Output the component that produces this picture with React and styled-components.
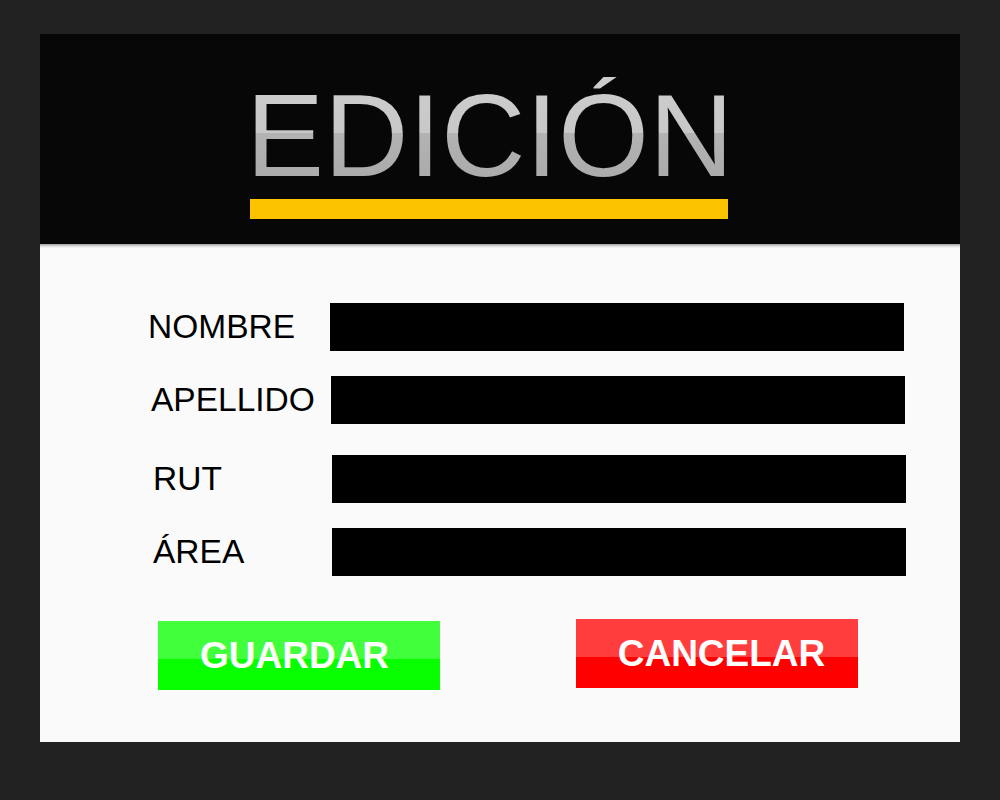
import styled, { createGlobalStyle } from 'styled-components';

const GlobalStyle = createGlobalStyle`
  html, body {
    margin: 0;
    padding: 0;
    background: #222222;
  }
  body {
    font-family: "Liberation Sans", Arial, sans-serif;
  }
`;

const fields = [
    { label: 'NOMBRE', left: 108, right: 56, top: 0 },
    { label: 'APELLIDO', left: 111, right: 55, top: 25 },
    { label: 'RUT', left: 113, right: 54, top: 31 },
    { label: 'ÁREA', left: 113, right: 54, top: 25 },
];

const App = () => {
    return (
        <>
            <GlobalStyle />
            <Page>
                <Panel>
                    <Header>
                        <Title>EDICIÓN</Title>
                        <TitleBar />
                    </Header>
                    <Divider />
                    <FormBody>
                        {fields.map((f) => (
                            <Row key={f.label} $left={f.left} $right={f.right} $top={f.top}>
                                <Label>{f.label}</Label>
                                <Field type="text" />
                            </Row>
                        ))}
                        <Buttons>
                            <Button $top="#42ff3b" $bottom="#07ff00" $offset={2} $shift={-9}>GUARDAR</Button>
                            <Button $top="#ff3d3d" $bottom="#fe0000" $offset={0} $shift={9}>CANCELAR</Button>
                        </Buttons>
                    </FormBody>
                </Panel>
            </Page>
        </>
    );
};

const Page = styled.div`
    width: 1000px;
    height: 800px;
    padding: 34px 40px 0;
    box-sizing: border-box;
    background: #222222;
`;

const Panel = styled.div`
    width: 920px;
    height: 708px;
    display: flex;
    flex-direction: column;
    background: #fafafa;
`;

const Header = styled.div`
    height: 210px;
    flex: none;
    box-sizing: border-box;
    padding: 43px 0 0 206px;
    background: #070707;
    display: flex;
    flex-direction: column;
    align-items: flex-start;
`;

const Divider = styled.div`
    height: 4px;
    flex: none;
    background: linear-gradient(#9a9a9a, #d8d8d8 50%, #fafafa);
`;

const Title = styled.h1`
    margin: 0;
    font-family: "Liberation Sans", Arial, sans-serif;
    font-weight: normal;
    font-size: 117px;
    line-height: 117px;
    background: linear-gradient(#cdcdcd 0%, #c8c8c8 48%, #b3b3b3 48%, #a8a8a8 100%);
    -webkit-background-clip: text;
    background-clip: text;
    color: transparent;
`;

const TitleBar = styled.div`
    width: 478px;
    height: 20px;
    margin: 5px 0 0 4px;
    background: #fcc400;
`;

const FormBody = styled.div`
    flex: 1;
    padding-top: 55px;
    display: flex;
    flex-direction: column;
`;

const Row = styled.div`
    display: flex;
    align-items: center;
    padding: 0 ${(p) => p.$right}px 0 ${(p) => p.$left}px;
    margin-top: ${(p) => p.$top}px;
`;

const Label = styled.label`
    flex: 1;
    font-size: 33.5px;
    color: #000;
    line-height: 48px;
`;

const Field = styled.input`
    width: 574px;
    height: 48px;
    box-sizing: border-box;
    border: none;
    outline: none;
    background: #000;
    color: #fff;
    font-size: 20px;
    padding: 0 10px;
`;

const Buttons = styled.div`
    display: flex;
    align-items: flex-start;
    gap: 136px;
    padding-left: 118px;
    margin-top: 43px;
`;

const Button = styled.button`
    width: 282px;
    height: 69px;
    margin-top: ${(p) => p.$offset}px;
    border: none;
    padding: 0;
    text-indent: ${(p) => p.$shift}px;
    background: linear-gradient(${(p) => p.$top} 0%, ${(p) => p.$top} 55%, ${(p) => p.$bottom} 55%, ${(p) => p.$bottom} 100%);
    color: #fff;
    font-family: "Liberation Sans", Arial, sans-serif;
    font-weight: bold;
    font-size: 37px;
    cursor: pointer;
`;

export default App;
